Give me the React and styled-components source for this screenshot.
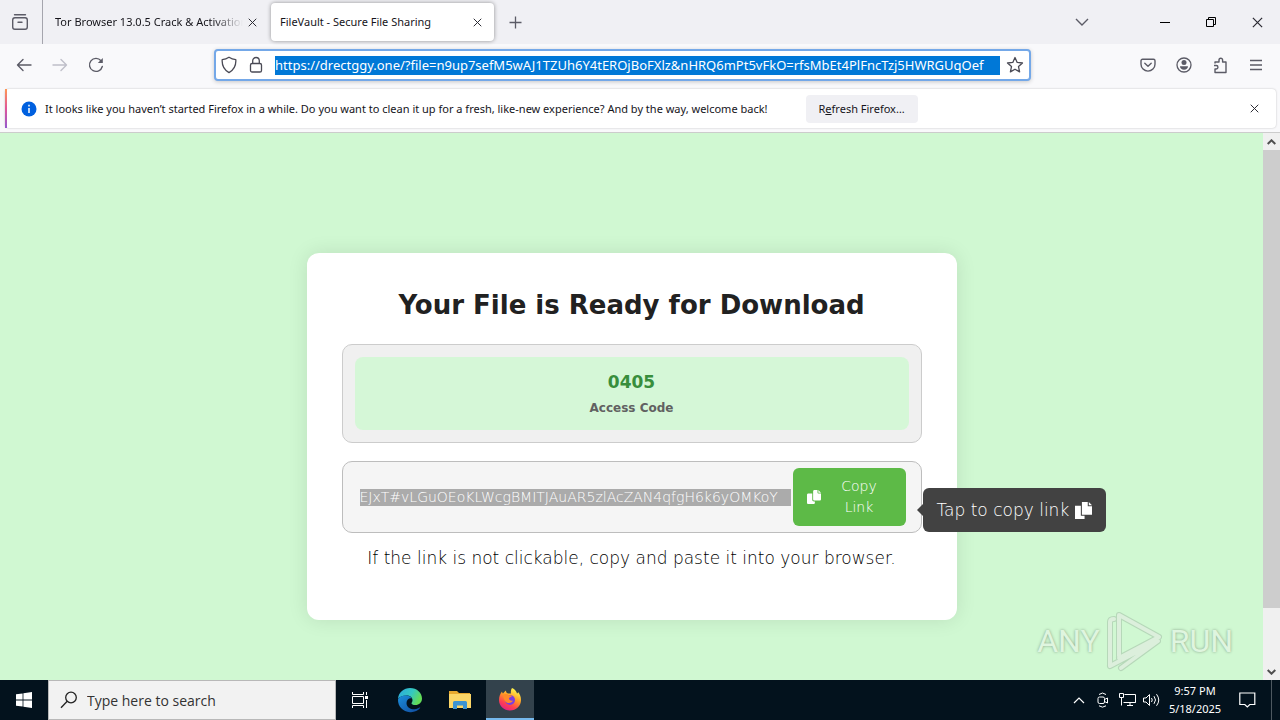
import styled, { createGlobalStyle } from "styled-components";

const GlobalStyle = createGlobalStyle`
  * {
    box-sizing: border-box;
  }

  body {
    margin: 0;
    font-family: "Noto Sans", "Open Sans", sans-serif;
    color: #15141a;
  }

  button, input {
    font-family: inherit;
    margin: 0;
  }
`;

function CloseIcon({ size }) {
  return (
    <svg width={size} height={size} viewBox="0 0 10 10" fill="none" stroke="#2b2a33" strokeWidth="1.1">
      <path d="M0.8 0.8l8.4 8.4M9.2 0.8L0.8 9.2" />
    </svg>
  );
}

function TabBar() {
  return (
    <TabStrip>
      <ViewButton aria-label="Firefox View">
        <svg width="18" height="18" viewBox="0 0 18 18" fill="none" stroke="#5b5b66" strokeWidth="1.4">
          <path d="M3.5 1.7h11" strokeLinecap="round" />
          <rect x="1.7" y="4.7" width="14.6" height="11.6" rx="2.2" />
          <path d="M7 9.2h4" strokeLinecap="round" />
        </svg>
      </ViewButton>
      <Tab>
        <TabTitle $fade>Tor Browser 13.0.5 Crack &amp; Activation</TabTitle>
        <TabClose aria-label="Close tab"><CloseIcon size={9} /></TabClose>
      </Tab>
      <Tab $active>
        <TabTitle>FileVault - Secure File Sharing</TabTitle>
        <TabClose aria-label="Close tab"><CloseIcon size={9} /></TabClose>
      </Tab>
      <IconButton aria-label="New tab">
        <svg width="13" height="13" viewBox="0 0 13 13" stroke="#5b5b66" strokeWidth="1.3">
          <path d="M6.5 0.5v12M0.5 6.5h12" />
        </svg>
      </IconButton>
      <Spacer />
      <IconButton aria-label="List all tabs">
        <svg width="14" height="8" viewBox="0 0 14 8" fill="none" stroke="#5b5b66" strokeWidth="1.4">
          <path d="M1 1l6 6 6-6" />
        </svg>
      </IconButton>
      <WindowControls>
        <WindowButton aria-label="Minimize">
          <svg width="10" height="10" viewBox="0 0 10 10" stroke="#000"><path d="M0 5.5h10" /></svg>
        </WindowButton>
        <WindowButton aria-label="Restore">
          <svg width="10" height="10" viewBox="0 0 10 10" fill="none" stroke="#000">
            <path d="M0.5 2.5h7v7h-7zM2.5 2.5v-2h7v7h-2" />
          </svg>
        </WindowButton>
        <WindowButton aria-label="Close"><CloseIcon size={11} /></WindowButton>
      </WindowControls>
    </TabStrip>
  );
}

function NavBar() {
  return (
    <Toolbar>
      <ButtonGroup>
        <IconButton aria-label="Back">
          <svg width="16" height="14" viewBox="0 0 16 14" fill="none" stroke="#5b5b66" strokeWidth="1.4" strokeLinecap="round" strokeLinejoin="round">
            <path d="M15 7H1.5M7 1.5L1.5 7 7 12.5" />
          </svg>
        </IconButton>
        <IconButton aria-label="Forward" disabled>
          <svg width="16" height="14" viewBox="0 0 16 14" fill="none" stroke="#bfbfc9" strokeWidth="1.4" strokeLinecap="round" strokeLinejoin="round">
            <path d="M1 7h13.5M9 1.5L14.5 7 9 12.5" />
          </svg>
        </IconButton>
        <IconButton aria-label="Reload">
          <svg width="16" height="16" viewBox="0 0 16 16" fill="none" stroke="#5b5b66" strokeWidth="1.4" strokeLinecap="round">
            <path d="M14.3 9.5A6.5 6.5 0 1 1 13 3.7" />
            <path d="M14.8 1v5h-5z" fill="#5b5b66" stroke="none" />
          </svg>
        </IconButton>
      </ButtonGroup>
      <UrlBar>
        <svg width="16" height="18" viewBox="0 0 16 18" fill="none" stroke="#4a4a55" strokeWidth="1.3" strokeLinejoin="round">
          <path d="M8 1.2c2 1.3 4.2 2.1 6.8 2.4C15.2 9 13 13.8 8 16.6 3 13.8.8 9 1.2 3.6 3.8 3.3 6 2.5 8 1.2z" />
        </svg>
        <svg width="14" height="18" viewBox="0 0 14 18" fill="none" stroke="#4a4a55" strokeWidth="1.3">
          <rect x="1.5" y="7.5" width="11" height="8.5" rx="1.6" />
          <path d="M3.7 7.5V4.8a3.3 3.3 0 0 1 6.6 0v2.7" />
        </svg>
        <UrlInput
          aria-label="Address"
          spellCheck="false"
          defaultValue="https://drectggy.one/?file=n9up7sefM5wAJ1TZUh6Y4tEROjBoFXlz&nHRQ6mPt5vFkO=rfsMbEt4PlFncTzj5HWRGUqOef"
        />
        <svg width="18" height="18" viewBox="0 0 18 18" fill="none" stroke="#4a4a55" strokeWidth="1.3" strokeLinejoin="round">
          <path d="M9 1.5l2.2 4.9 5.3.6-4 3.6 1.1 5.3L9 13.2l-4.6 2.7 1.1-5.3-4-3.6 5.3-.6z" />
        </svg>
      </UrlBar>
      <ButtonGroup>
        <IconButton aria-label="Pocket">
          <svg width="16" height="16" viewBox="0 0 16 16" fill="none" stroke="#5b5b66" strokeWidth="1.4" strokeLinecap="round" strokeLinejoin="round">
            <path d="M2.5 2.2h11a1.5 1.5 0 0 1 1.5 1.5v3.6a7 6.8 0 0 1-14 0V3.7a1.5 1.5 0 0 1 1.5-1.5zM4.8 6.3L8 9.3l3.2-3" />
          </svg>
        </IconButton>
        <IconButton aria-label="Account">
          <svg width="16" height="16" viewBox="0 0 16 16" fill="#5b5b66">
            <circle cx="8" cy="8" r="7" fill="none" stroke="#5b5b66" strokeWidth="1.3" />
            <circle cx="8" cy="5.6" r="2.5" />
            <path d="M4 9.3h8c0 2.2-1.8 3.5-4 3.5s-4-1.3-4-3.5z" />
          </svg>
        </IconButton>
        <IconButton aria-label="Extensions">
          <svg width="16" height="17" viewBox="0 0 16 17" fill="none" stroke="#5b5b66" strokeWidth="1.4" strokeLinejoin="round">
            <path d="M3 6.5V5h4V3a1.8 1.8 0 0 1 3.6 0v2H14v10.5H3V12h1.2a1.7 1.7 0 0 0 0-3.5H2" />
          </svg>
        </IconButton>
        <IconButton aria-label="Menu">
          <svg width="14" height="12" viewBox="0 0 14 12" stroke="#5b5b66" strokeWidth="1.3">
            <path d="M1 1.5h12M1 6h12M1 10.5h12" />
          </svg>
        </IconButton>
      </ButtonGroup>
    </Toolbar>
  );
}

function Notification() {
  return (
    <NoticeArea>
      <Notice>
        <svg width="16" height="16" viewBox="0 0 16 16">
          <circle cx="8" cy="8" r="7.5" fill="#0060df" />
          <path d="M8 7v5M8 3.8v1.6" stroke="#fff" strokeWidth="1.5" />
        </svg>
        <NoticeText>
          It looks like you haven’t started Firefox in a while. Do you want to clean it up for a fresh, like-new experience? And by the way, welcome back!
        </NoticeText>
        <RefreshButton>R<u>e</u>fresh Firefox…</RefreshButton>
        <Spacer />
        <IconButton aria-label="Dismiss"><CloseIcon size={9} /></IconButton>
      </Notice>
    </NoticeArea>
  );
}

// rounded pages on the button, square ones in the tooltip
function PagesIcon({ size, square }) {
  return (
    <svg width={size} height={size} viewBox="0 0 512 512" fill="currentColor">
      {square ? (
        <path d="M384 128V0H208v384h304V128zM416 0v96h96zM176 416V112H0v400h288v-96z" />
      ) : (
        <path d="M384 96V0H272c-26.5 0-48 21.5-48 48v288c0 26.5 21.5 48 48 48h192c26.5 0 48-21.5 48-48V128h-95.1C398.4 128 384 113.6 384 96zM416 0v96h96L416 0zM192 352V128H48c-26.5 0-48 21.5-48 48v288c0 26.5 21.5 48 48 48h192c26.5 0 48-21.5 48-48v-48h-32c-35.3 0-64-28.7-64-64z" />
      )}
    </svg>
  );
}

function DownloadCard() {
  return (
    <Card>
      <Title>Your File is Ready for Download</Title>
      <CodeBox>
        <CodePanel>
          <Code>0405</Code>
          <CodeLabel>Access Code</CodeLabel>
        </CodePanel>
      </CodeBox>
      <LinkBox>
        <LinkInput
          aria-label="Download link"
          readOnly
          value="EJxT#vLGuOEoKLWcgBMITJAuAR5zlAcZAN4qfgH6k6yOMKoY"
        />
        <CopyButton>
          <PagesIcon size={14} />
          <span>Copy Link</span>
        </CopyButton>
        <Tooltip role="tooltip">
          Tap to copy link <PagesIcon size={17} square />
        </Tooltip>
      </LinkBox>
      <Hint>If the link is not clickable, copy and paste it into your browser.</Hint>
    </Card>
  );
}

function Watermark() {
  return (
    <Brand>
      ANY
      <svg width="58" height="62" viewBox="0 0 58 62" fill="none" strokeLinejoin="round" strokeLinecap="round">
        <g stroke="#9bb89f" strokeOpacity="0.5" strokeWidth="6">
          <path d="M4 56V12q0-3 4-3M13 46V5l40 22M13 48l38-20M4 56L52 31 15 58" />
        </g>
        <g stroke="#dcefdc" strokeWidth="4">
          <path d="M4 56V12q0-3 4-3M13 46V5l40 22M13 48l38-20M4 56L52 31 15 58" />
        </g>
      </svg>
      RUN
    </Brand>
  );
}

function Taskbar() {
  return (
    <Bar>
      <TaskButton aria-label="Start">
        <svg width="16" height="16" viewBox="0 0 16 16" fill="#fff">
          <path d="M0 2.3L6.6 1.4v6.2H0zM7.4 1.3L16 0v7.6H7.4zM0 8.4h6.6v6.2L0 13.7zM7.4 8.4H16V16l-8.6-1.3z" />
        </svg>
      </TaskButton>
      <SearchBox>
        <svg width="18" height="18" viewBox="0 0 18 18" fill="none" stroke="#222" strokeWidth="1.3">
          <circle cx="11" cy="6.5" r="5.3" />
          <path d="M7.2 10.3L1 16.8" />
        </svg>
        <SearchInput aria-label="Search" placeholder="Type here to search" />
      </SearchBox>
      <Apps>
        <TaskButton aria-label="Task View">
          <svg width="17" height="16" viewBox="0 0 17 16" fill="none" stroke="#fff">
            <path d="M0.5 0v2.5h11V0M0.5 16v-2.5h11V16M0.5 4.5h11v7H0.5zM14.5 0v3M14.5 8v8" />
            <path d="M13 4h3v3h-3z" fill="#fff" stroke="none" />
          </svg>
        </TaskButton>
        <TaskButton aria-label="Microsoft Edge">
          <svg width="26" height="26" viewBox="0 0 26 26">
            <defs>
              <linearGradient id="edgeTop" x1="0" y1="0" x2="1" y2="0.4">
                <stop offset="0" stopColor="#2aa7e0" />
                <stop offset="0.6" stopColor="#35c8c0" />
                <stop offset="1" stopColor="#63dc57" />
              </linearGradient>
              <linearGradient id="edgeLow" x1="0" y1="0" x2="1" y2="1">
                <stop offset="0" stopColor="#1b8edb" />
                <stop offset="1" stopColor="#104a9e" />
              </linearGradient>
            </defs>
            <path d="M1 12C1.5 5 7 1 13 1c7 0 12 5 12 10.5 0 4-3 6.5-6.5 6.5-2.5 0-4-.8-4-1.8 0-.8 1-1.2 1-3C15.5 10.5 13 8.5 9.5 8.5 5.5 8.5 2.5 10 1 12z" fill="url(#edgeTop)" />
            <path d="M1 12.5C2 10 5.5 8.3 9.5 8.5c2.8.1 4.7 1.5 5.5 3-2-1-5.5.5-5.5 4.5 0 4.500 4.500 6.500 8 6.300 2.500-.1 4-1 5-1.700.5-.3.900.1.600.5C21 24 17 25.500 13 25.200 6 24.800.8 19.500 1 12.500z" fill="url(#edgeLow)" />
          </svg>
        </TaskButton>
        <TaskButton aria-label="File Explorer">
          <svg width="22" height="20" viewBox="0 0 22 20">
            <path d="M0 1h8l2 2h11v4H0z" fill="#e8a92e" />
            <path d="M0 4h22v14H0z" fill="#fcd667" />
            <path d="M4 19v-6.5Q4 11 5.5 11h11q1.5 0 1.5 1.5V19h-4v-3.5H8V19z" fill="#3c93d2" />
          </svg>
        </TaskButton>
        <TaskButton aria-label="Firefox" $active>
          <svg width="24" height="24" viewBox="0 0 24 24">
            <defs>
              <linearGradient id="fox" x1="0.8" y1="0" x2="0.3" y2="1">
                <stop offset="0.1" stopColor="#fff04a" />
                <stop offset="0.45" stopColor="#ff9a26" />
                <stop offset="0.75" stopColor="#ff4050" />
                <stop offset="1" stopColor="#e0208a" />
              </linearGradient>
            </defs>
            <path d="M14 1c3 1.2 4.5 3.5 5 5.5.8-.2 1-.8 1-1.5 2 2.3 3 5 3 8 0 6-5 10.5-11 10.5S1 19 1 13c0-3.5 1.2-6.2 3-8.5.2 1 .5 1.5 1 2C6 5 7 4 8 3.5c0 1.5.5 2.5 2 3h3C12.5 4.5 13 2.5 14 1z" fill="url(#fox)" />
            <circle cx="12" cy="13" r="5" fill="#7a3ee0" />
            <path d="M5 8c2-1.5 4.5-1.2 6 .2l3 .3c0 1.5-2.5 1.5-3 2.5-.2 1.5 1.5 3.5 4 2.5-1 3-6 3.5-8 .5C5.8 12 5.2 10 5 8z" fill="#ff8a28" />
          </svg>
        </TaskButton>
      </Apps>
      <Spacer />
      <Tray>
        <svg width="12" height="8" viewBox="0 0 12 8" fill="none" stroke="#fff" strokeWidth="1.2"><path d="M1 7l5-5 5 5" /></svg>
        <svg width="12" height="16" viewBox="0 0 12 16" fill="none" stroke="#fff">
          <rect x="1" y="5" width="6.5" height="6.5" rx="1.5" />
          <path d="M7.5 7.5l3-1.5v5l-3-1.5M2 2.5Q5.5-.5 9 2.5M2 13.8q3.5 2.7 7 0" />
        </svg>
        <svg width="17" height="14" viewBox="0 0 17 14" fill="none" stroke="#fff">
          <path d="M5.5 1.5h11v8h-11M4.5 9.5h12M8 12.5h6M11 9.5v3M0.5 0.5h4v4h-4zM2.5 4.5v8" />
        </svg>
        <svg width="17" height="14" viewBox="0 0 17 14" fill="none" stroke="#fff">
          <path d="M0.5 5H3l3.5-3.5v11L3 9H0.5zM8.5 5q1.5 2 0 4M11 3.2q3 3.8 0 7.6M13.5 1.2q4.5 5.8 0 11.6" />
        </svg>
      </Tray>
      <Clock>
        <span>9:57 PM</span>
        <span>5/18/2025</span>
      </Clock>
      <TaskButton aria-label="Notifications">
        <svg width="17" height="17" viewBox="0 0 17 17" fill="none" stroke="#fff" strokeWidth="1.2">
          <path d="M0.8 1h15v11.5h-5l-2.5 2.5-2.5-2.5h-5z" />
        </svg>
      </TaskButton>
      <ShowDesktop aria-label="Show desktop" />
    </Bar>
  );
}

export default function App() {
  return (
    <Screen>
      <GlobalStyle />
      <TabBar />
      <NavBar />
      <Notification />
      <Viewport>
        <Page>
          <DownloadCard />
        </Page>
        <Scrollbar>
          <ScrollArrow aria-label="Scroll up">
            <svg width="9" height="6" viewBox="0 0 9 6" fill="none" stroke="#505050" strokeWidth="2"><path d="M0.7 5L4.5 1.3 8.3 5" /></svg>
          </ScrollArrow>
          <ScrollThumb />
          <ScrollArrow aria-label="Scroll down">
            <svg width="9" height="6" viewBox="0 0 9 6" fill="none" stroke="#505050" strokeWidth="2"><path d="M0.7 1L4.5 4.7 8.3 1" /></svg>
          </ScrollArrow>
        </Scrollbar>
        <Watermark />
      </Viewport>
      <Taskbar />
    </Screen>
  );
}

const Screen = styled.div`
  min-height: 100vh;
  display: flex;
  flex-direction: column;
  background-color: #f9f9fb;
`;
const Spacer = styled.div`
  flex: 1;
`;
const IconButton = styled.button`
  width: 36px;
  height: 32px;
  padding: 0;
  display: flex;
  align-items: center;
  justify-content: center;
  border: none;
  background: none;
`;
const TabStrip = styled.header`
  height: 44px;
  display: flex;
  align-items: center;
  background-color: #f0f0f4;
`;
const ViewButton = styled(IconButton)`
  width: 43px;
  height: 44px;
  padding-right: 2px;
  border-right: 1px solid #a5a5ad;
`;
const Tab = styled.div`
  width: ${props => props.$active ? "223px" : "228px"};
  height: 38px;
  display: flex;
  align-items: center;
  padding: ${props => props.$active ? "0 8px 0 9px" : "0 10px 0 12px"};
  margin-right: ${props => props.$active ? "3px" : "0"};
  border-radius: 4px;
  background-color: ${props => props.$active ? "#ffffff" : "transparent"};
  box-shadow: ${props => props.$active ? "0 0 4px rgba(0, 0, 0, 0.4)" : "none"};
`;
const TabTitle = styled.span`
  flex: 1;
  min-width: 0;
  overflow: hidden;
  white-space: nowrap;
  font-size: 11px;
  line-height: 16px;
  mask-image: ${props => props.$fade ? "linear-gradient(to right, #000 84%, transparent)" : "none"};
`;
const TabClose = styled.button`
  width: 18px;
  height: 24px;
  padding: 0;
  border: none;
  background: none;
`;
const WindowControls = styled.div`
  display: flex;
  margin-left: 42px;
`;
const WindowButton = styled(IconButton)`
  width: 46px;
`;
const Toolbar = styled.nav`
  height: 42px;
  display: flex;
  align-items: center;
  padding: 0 6px;
`;
const ButtonGroup = styled.div`
  display: flex;
`;
const UrlBar = styled.div`
  flex: 0 1 817px;
  height: 32px;
  display: flex;
  align-items: center;
  gap: 12px;
  padding: 0 5px;
  margin: 0 auto 0 100px;
  background-color: #ffffff;
  border: 2px solid #74a8e8;
  border-radius: 4px;
  box-shadow: 0 1px 4px rgba(0, 0, 0, 0.2);
`;
const UrlInput = styled.input`
  flex: 1;
  min-width: 0;
  height: 19px;
  padding: 0;
  margin-right: -6px;
  border: none;
  outline: none;
  font-size: 13px;
  line-height: 19px;
  color: #ffffff;
  background-color: #0078d7;
`;
const NoticeArea = styled.div`
  padding: 3px 4px 4px 5px;
  border-bottom: 1px solid #cccccc;
`;
const Notice = styled.div`
  height: 39px;
  display: flex;
  align-items: center;
  padding: 0 4px 0 14px;
  background-color: #ffffff;
  border-radius: 4px;
  border-left: 2px solid #b5509c;
  border-image: linear-gradient(#ff9a50, #e0559a, #9059d0) 1;
  border-image-width: 0 0 0 2px;
  box-shadow: 0 0 2px rgba(0, 0, 0, 0.25);
`;
const NoticeText = styled.span`
  margin-left: 8px;
  font-size: 11px;
  line-height: 16px;
  white-space: nowrap;
`;
const RefreshButton = styled.button`
  height: 28px;
  margin-left: 38px;
  padding: 0 13px;
  border: none;
  border-radius: 4px;
  background-color: #f0f0f4;
  color: #15141a;
  font-size: 11px;
  white-space: nowrap;
`;
const Viewport = styled.div`
  flex: 1;
  display: flex;
  position: relative;
`;
const Page = styled.main`
  flex: 1;
  display: flex;
  flex-direction: column;
  align-items: center;
  padding: 120px 20px 40px;
  background-color: #d0f8d2;
  font-family: "DejaVu Sans", sans-serif;
`;
const Scrollbar = styled.div`
  width: 17px;
  display: flex;
  flex-direction: column;
  background-color: #f0f0f0;
`;
const ScrollArrow = styled.button`
  height: 17px;
  padding: 0;
  display: flex;
  align-items: center;
  justify-content: center;
  border: none;
  background-color: #f0f0f0;
`;
const ScrollThumb = styled.div`
  flex: 1;
  margin-bottom: 55px;
  background-color: #cdcdcd;
`;
const Card = styled.section`
  width: 100%;
  max-width: 650px;
  padding: 35px 35px 49px;
  display: flex;
  flex-direction: column;
  background-color: #ffffff;
  border-radius: 12px;
  box-shadow: 0 0 20px rgba(0, 0, 0, 0.1);
  text-align: center;
`;
const Title = styled.h1`
  margin: 0 0 22px;
  font-size: 26px;
  line-height: 34px;
  color: #212121;
`;
const CodeBox = styled.div`
  padding: 12px;
  border: 1px solid #cccccc;
  border-radius: 10px;
  background-color: #f0f0f0;
`;
const CodePanel = styled.div`
  display: flex;
  flex-direction: column;
  gap: 4px;
  padding: 12px;
  border-radius: 8px;
  background-color: #d5f7d7;
  font-weight: bold;
`;
const Code = styled.span`
  font-size: 17px;
  line-height: 26px;
  color: #388e3c;
`;
const CodeLabel = styled.span`
  font-size: 12px;
  line-height: 19px;
  color: #616161;
`;
const LinkBox = styled.div`
  position: relative;
  display: flex;
  align-items: center;
  margin-top: 18px;
  padding: 6px 15px 6px 17px;
  border: 1px solid #bdbdbd;
  border-radius: 10px;
  background-color: #f5f5f5;
  font-weight: 200;
`;
const LinkInput = styled.input`
  flex: 1;
  min-width: 0;
  height: 17px;
  padding: 0;
  margin-right: 2px;
  border: none;
  outline: none;
  font-size: 14px;
  font-weight: inherit;
  color: #ffffff;
  background-color: #ababab;
`;
const CopyButton = styled.button`
  width: 113px;
  height: 58px;
  display: flex;
  align-items: center;
  padding: 0 14px;
  border: none;
  border-radius: 6px;
  background-color: #5dba47;
  color: #ffffff;
  font-size: 14px;
  font-weight: inherit;
  line-height: 21px;

  span {
    flex: 1;
    padding: 0 10px 0 16px;
  }
`;
const Tooltip = styled.div`
  position: absolute;
  left: 100%;
  top: 26px;
  margin-left: 2px;
  height: 44px;
  display: flex;
  align-items: center;
  gap: 6px;
  padding: 0 14px;
  border-radius: 6px;
  background-color: #424242;
  color: #ffffff;
  font-size: 17px;
  white-space: nowrap;

  &::before {
    content: "";
    position: absolute;
    right: 100%;
    border: 6px solid transparent;
    border-right-color: #424242;
    border-left: none;
  }
`;
const Hint = styled.p`
  margin: 12px 0 0;
  font-size: 17px;
  font-weight: 200;
  line-height: 26px;
  color: #000000;
`;
const Brand = styled.div`
  position: absolute;
  right: 47px;
  bottom: 8px;
  display: flex;
  align-items: center;
  gap: 6px;
  font-family: Roboto, sans-serif;
  font-size: 32px;
  color: #dff5df;
  text-shadow: 0 0 3px #86a088;
`;
const Bar = styled.footer`
  height: 40px;
  display: flex;
  background-color: #03121d;
  color: #ffffff;
`;
const Apps = styled.div`
  display: flex;
  gap: 2px;
`;
const TaskButton = styled.button`
  width: 48px;
  padding: 0;
  display: flex;
  align-items: center;
  justify-content: center;
  border: none;
  border-bottom: ${props => props.$active ? "2px solid #76b9ed" : "none"};
  background-color: ${props => props.$active ? "#33424c" : "transparent"};
`;
const SearchBox = styled.label`
  flex: 0 1 288px;
  display: flex;
  align-items: center;
  gap: 8px;
  padding: 0 11px;
  border: 1px solid #b8b8b8;
  background-color: #f2f2f2;
`;
const SearchInput = styled.input`
  flex: 1;
  min-width: 0;
  padding: 0 1px;
  border: none;
  outline: none;
  background: none;
  font-family: "Open Sans", sans-serif;
  font-size: 14px;

  &::placeholder {
    color: #333333;
  }
`;
const Tray = styled.div`
  display: grid;
  grid-template-columns: repeat(4, 24px);
  align-items: center;
  justify-items: center;
  margin-right: 4px;
`;
const Clock = styled.div`
  width: 56px;
  display: flex;
  flex-direction: column;
  justify-content: center;
  text-align: center;
  font-size: 11px;
  line-height: 18px;
`;
const ShowDesktop = styled.button`
  width: 9px;
  padding: 0;
  border: none;
  border-left: 1px solid #4d5860;
  background: none;
`;
